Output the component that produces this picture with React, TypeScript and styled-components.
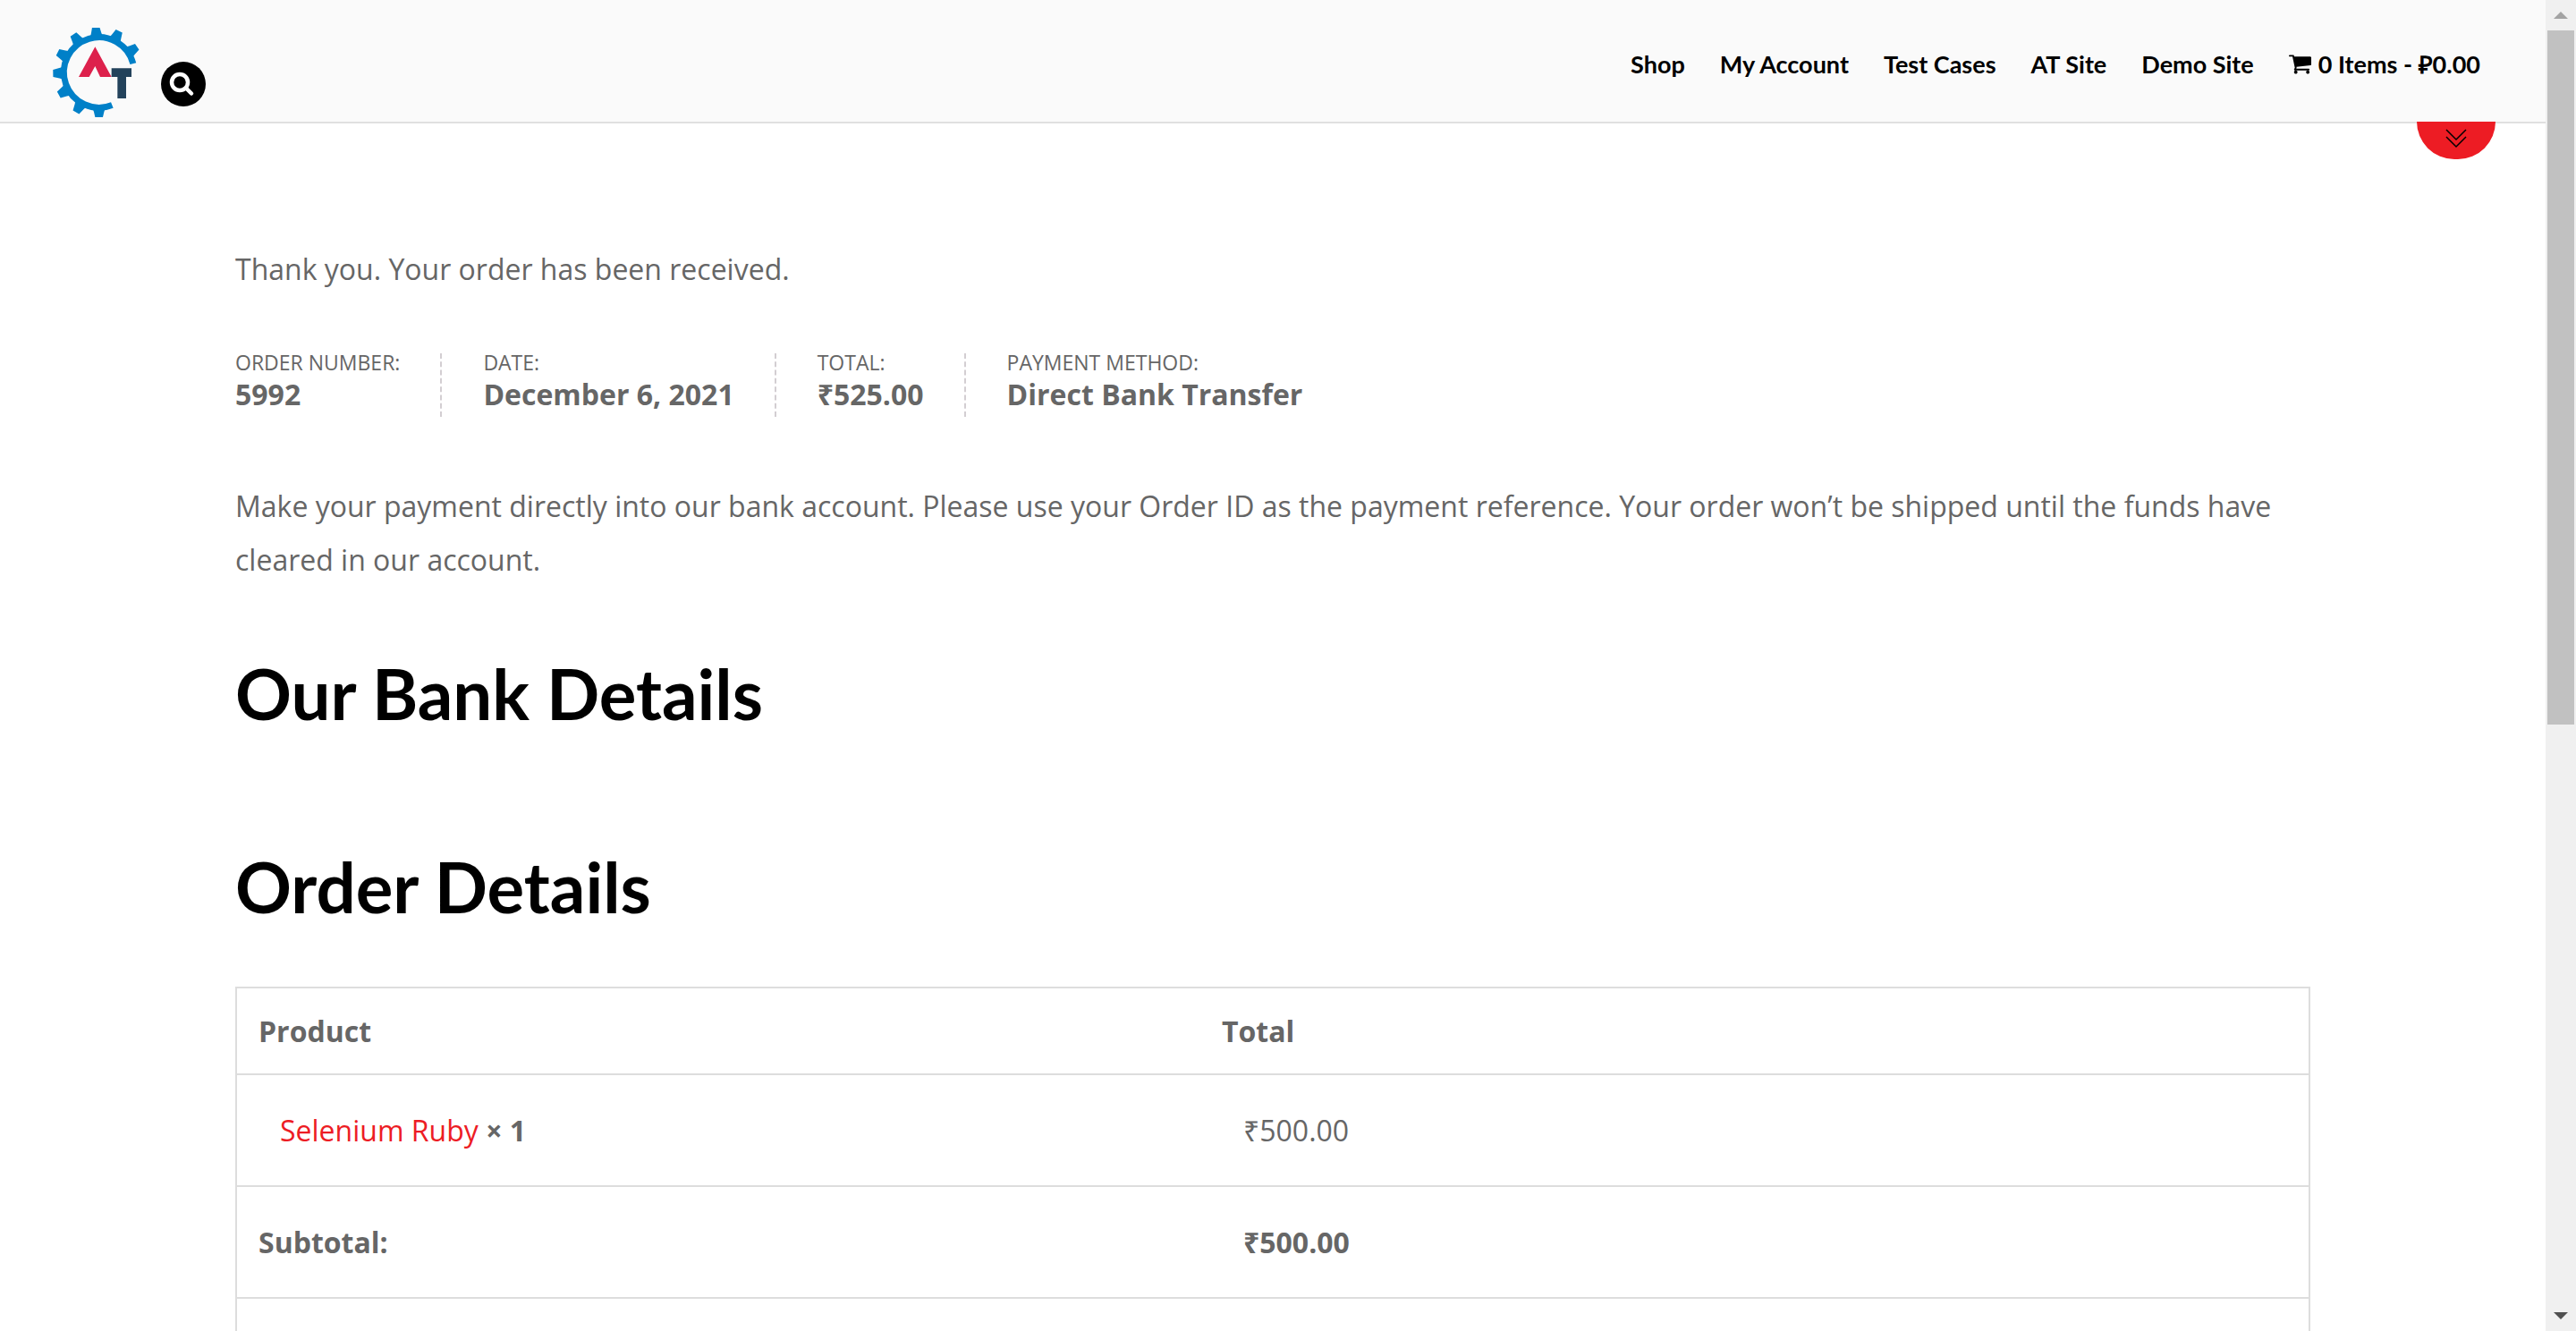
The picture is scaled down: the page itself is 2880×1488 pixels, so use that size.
import React from "react";
import styled, { createGlobalStyle } from "styled-components";

const GlobalStyle = createGlobalStyle`
  *, *::before, *::after { box-sizing: border-box; }
  body {
    margin: 0;
    background: #fff;
    color: #666;
    font-family: "Open Sans", "Noto Sans", sans-serif;
    font-size: 32px;
    line-height: 60px;
  }
  a { text-decoration: none; }
`;

const Window = styled.div`
  display: grid;
  grid-template-columns: minmax(0, 1fr) 34px;
  height: 100vh;
`;

const Page = styled.div`
  overflow-y: auto;
  scrollbar-width: none;
`;

const Header = styled.header`
  position: relative;
  display: flex;
  justify-content: space-between;
  align-items: flex-start;
  padding: 31px 73px 5px 59px;
  background: #fafafa;
  border-bottom: 2px solid #e0e0e0;
`;

const Brand = styled.div`
  display: flex;
  align-items: flex-end;
  gap: 24px;
`;

const LogoLink = styled.a`
  display: block;
  line-height: 0;
`;

const SearchButton = styled.button`
  width: 50px;
  height: 50px;
  margin: 0 0 12px;
  padding: 0;
  border: 0;
  border-radius: 50%;
  background: #000;
  line-height: 0;
  cursor: pointer;
`;

const Nav = styled.nav`
  display: flex;
  gap: 39px;
  padding-top: 25px;
`;

const NavLink = styled.a`
  display: flex;
  align-items: center;
  gap: 8px;
  color: #000;
  font: 700 27px/32px Lato, "Open Sans", sans-serif;
  white-space: nowrap;
`;

const PanelToggle = styled.button`
  position: absolute;
  top: 100%;
  right: 56px;
  width: 88px;
  height: 42px;
  padding: 0 0 4px;
  border: 0;
  border-radius: 0 0 44px 44px;
  background: #ed1c24;
  line-height: 0;
  cursor: pointer;
`;

const Content = styled.main`
  max-width: 2320px;
  margin: 0 auto;
  padding-top: 133px;
`;

const Paragraph = styled.p`
  margin: 0;
`;

const Overview = styled.ul`
  display: flex;
  margin: 64px 0 70px;
  padding: 0;
  list-style: none;
`;

const OverviewItem = styled.li`
  margin-right: 46px;
  padding-right: 45px;
  border-right: 2px dashed #d3ced2;
  font-size: 23px;
  line-height: 20px;
  text-transform: uppercase;

  &:last-child { border-right: 0; }
`;

const OverviewValue = styled.strong`
  display: block;
  font-size: 32px;
  line-height: 51px;
  text-transform: none;
`;

const Heading = styled.h2<{ $space: number }>`
  margin: ${(p) => p.$space}px 0 0;
  color: #000;
  font: 700 78px/96px Lato, sans-serif;
`;

const OrderTable = styled.table`
  width: 100%;
  margin-top: 64px;
  border: 2px solid #ddd;
  border-spacing: 0;
  table-layout: fixed;
  text-align: left;
`;

const ProductColumn = styled.col`
  width: 46.5%;
`;

const HeadCell = styled.th`
  padding: 18px 24px 17px;
`;

const LabelCell = styled.th`
  padding: 32px 24px 31px;
  border-top: 2px solid #ddd;
`;

const Cell = styled.td<{ $bold?: boolean }>`
  height: 125px;
  padding: 32px 48px 31px;
  border-top: 2px solid #ddd;
  font-weight: ${(p) => (p.$bold ? 700 : 400)};
`;

const ProductLink = styled.a`
  color: #ed1c24;
`;

const Scrollbar = styled.div`
  display: flex;
  flex-direction: column;
  padding: 0 2px;
  background: #f0f0f0;
`;

const ScrollArrow = styled.div<{ $color: string }>`
  display: flex;
  align-items: center;
  justify-content: center;
  height: 34px;
  color: ${(p) => p.$color};
`;

const Thumb = styled.div`
  flex: 776;
  background: #c1c1c1;
`;

const Track = styled.div`
  flex: 644;
`;

const toothAngles = [-94, -64, -34, -124, -154, 179, 151, 120, 90];

const Logo = () => (
  <svg width="97" height="100" viewBox="177 93 291 300" role="img" aria-label="AT">
    <path d="M376 352.500A118 118 0 1 1 446.500 213.500" fill="none" stroke="#0080c8" strokeWidth="21" />
    {toothAngles.map((angle) => (
      <path
        key={angle}
        d="M120-21 133-17 154-12V12L133 17 120 21Z"
        fill="#0080c8"
        transform={`translate(332 243) rotate(${angle})`}
      />
    ))}
    <path d="M319 157 374 258H336L319 222 299 258H264Z" fill="#dd214c" />
    <path d="M374 229H441V258H423V330H394V258H374Z" fill="#23425b" />
  </svg>
);

const SearchIcon = () => (
  <svg width="50" height="50" viewBox="0 0 50 50" fill="none" stroke="#fff" strokeWidth="4.500" strokeLinecap="round">
    <circle cx="21" cy="23" r="9" />
    <path d="M28 29.500 34 35.500" />
  </svg>
);

const CartIcon = () => (
  <svg width="25" height="22" viewBox="0 256 1664 1408" fill="currentColor" aria-hidden="true">
    <path d="M640 1536q0 52-38 90t-90 38-90-38-38-90 38-90 90-38 90 38 38 90zm896 0q0 52-38 90t-90 38-90-38-38-90 38-90 90-38 90 38 38 90zm128-1088v512q0 24-16.500 42.500t-40.500 21.500l-1044 122q13 60 13 70 0 16-24 64h920q26 0 45 19t19 45-19 45-45 19h-1024q-26 0-45-19t-19-45q0-11 8-31.500t16-36 21.500-40 15.500-29.500l-177-823h-204q-26 0-45-19t-19-45 19-45 45-19h256q16 0 28.500 6.500t19.500 15.500 13 24.500 8 26 5.500 29.500 4.500 26h1201q26 0 45 19t19 45z" />
  </svg>
);

const ChevronsIcon = () => (
  <svg width="24" height="22" viewBox="0 0 24 22" fill="none" stroke="#000" strokeWidth="1.500">
    <path d="M1 1 12 12 23 1M1 9 12 20 23 9" />
  </svg>
);

const navItems = ["Shop", "My Account", "Test Cases", "AT Site", "Demo Site"];

const overview = [
  { label: "Order number:", value: "5992" },
  { label: "Date:", value: "December 6, 2021" },
  { label: "Total:", value: "₹525.00" },
  { label: "Payment method:", value: "Direct Bank Transfer" },
];

export default function App() {
  return (
    <>
      <GlobalStyle />
      <Window>
        <Page>
          <Header>
            <Brand>
              <LogoLink href="#home">
                <Logo />
              </LogoLink>
              <SearchButton type="button" aria-label="Search">
                <SearchIcon />
              </SearchButton>
            </Brand>
            <Nav>
              {navItems.map((item) => (
                <NavLink key={item} href="#menu">
                  {item}
                </NavLink>
              ))}
              <NavLink href="#cart">
                <CartIcon />
                0 Items - ₽0.00
              </NavLink>
            </Nav>
            <PanelToggle type="button" aria-label="Toggle panel">
              <ChevronsIcon />
            </PanelToggle>
          </Header>

          <Content>
            <Paragraph>Thank you. Your order has been received.</Paragraph>
            <Overview>
              {overview.map(({ label, value }) => (
                <OverviewItem key={label}>
                  {label}
                  <OverviewValue>{value}</OverviewValue>
                </OverviewItem>
              ))}
            </Overview>
            <Paragraph>
              Make your payment directly into our bank account. Please use your Order ID as the payment reference. Your
              order won’t be shipped until the funds have cleared in our account.
            </Paragraph>

            <Heading $space={71}>Our Bank Details</Heading>
            <Heading $space={120}>Order Details</Heading>

            <OrderTable>
              <colgroup>
                <ProductColumn />
                <col />
              </colgroup>
              <thead>
                <tr>
                  <HeadCell scope="col">Product</HeadCell>
                  <HeadCell scope="col">Total</HeadCell>
                </tr>
              </thead>
              <tbody>
                <tr>
                  <Cell>
                    <ProductLink href="#product">Selenium Ruby</ProductLink> <strong>× 1</strong>
                  </Cell>
                  <Cell>₹500.00</Cell>
                </tr>
                <tr>
                  <LabelCell scope="row">Subtotal:</LabelCell>
                  <Cell $bold>₹500.00</Cell>
                </tr>
                <tr>
                  <Cell />
                  <Cell />
                </tr>
              </tbody>
            </OrderTable>
          </Content>
        </Page>

        <Scrollbar aria-hidden="true">
          <ScrollArrow $color="#a3a3a3">
            <svg width="16" height="8" viewBox="0 0 16 8" fill="currentColor">
              <path d="M0 8 8 0 16 8Z" />
            </svg>
          </ScrollArrow>
          <Thumb />
          <Track />
          <ScrollArrow $color="#505050">
            <svg width="16" height="8" viewBox="0 0 16 8" fill="currentColor">
              <path d="M0 0H16L8 8Z" />
            </svg>
          </ScrollArrow>
        </Scrollbar>
      </Window>
    </>
  );
}
